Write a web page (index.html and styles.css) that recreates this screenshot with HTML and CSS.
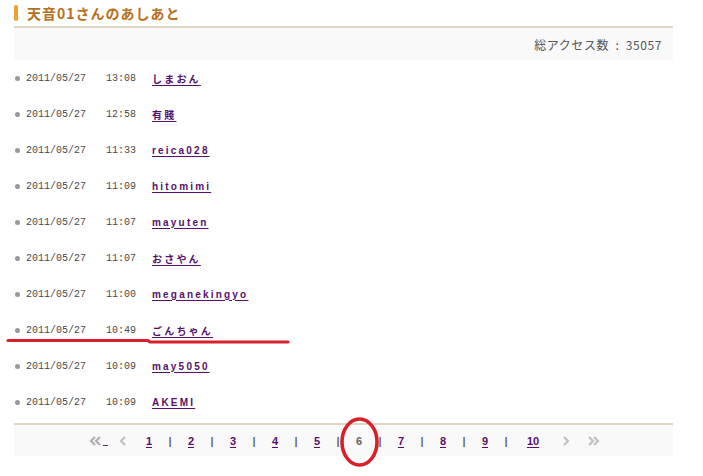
FILE: index.html
```html
<!DOCTYPE html>
<html lang="ja">
<head>
<meta charset="utf-8">
<link rel="stylesheet" href="styles.css">
</head>
<body>
<div class="page">
  <h2 class="title"><span class="title-bar"></span>天音01さんのあしあと</h2>
  <div class="panel total">総アクセス数 : 35057</div>
  <ul class="list">
    <li><span class="dot"></span><span class="date">2011/05/27</span><span class="time">13:08</span><a class="name" href="#">しまおん</a></li>
    <li><span class="dot"></span><span class="date">2011/05/27</span><span class="time">12:58</span><a class="name" href="#">有賤</a></li>
    <li><span class="dot"></span><span class="date">2011/05/27</span><span class="time">11:33</span><a class="name" href="#">reica028</a></li>
    <li><span class="dot"></span><span class="date">2011/05/27</span><span class="time">11:09</span><a class="name" href="#">hitomimi</a></li>
    <li><span class="dot"></span><span class="date">2011/05/27</span><span class="time">11:07</span><a class="name" href="#">mayuten</a></li>
    <li><span class="dot"></span><span class="date">2011/05/27</span><span class="time">11:07</span><a class="name" href="#">おさやん</a></li>
    <li><span class="dot"></span><span class="date">2011/05/27</span><span class="time">11:00</span><a class="name" href="#">meganekingyo</a></li>
    <li><span class="dot"></span><span class="date">2011/05/27</span><span class="time">10:49</span><a class="name" href="#">ごんちゃん</a></li>
    <li><span class="dot"></span><span class="date">2011/05/27</span><span class="time">10:09</span><a class="name" href="#">may5050</a></li>
    <li><span class="dot"></span><span class="date">2011/05/27</span><span class="time">10:09</span><a class="name" href="#">AKEMI</a></li>
  </ul>
  <div class="panel pager">
    <a class="arrow first" href="#"><svg width="14" height="10" viewBox="0 0 14 10"><path d="M6 1 L2 5 L6 9 M11 1 L7 5 L11 9" fill="none" stroke="#b0b0b0" stroke-width="2.2"/></svg><span class="us"></span></a>
    <span class="arrow prev"><svg width="9" height="10" viewBox="0 0 9 10"><path d="M6 1 L2 5 L6 9" fill="none" stroke="#c0c0c0" stroke-width="2.2"/></svg></span>
    <a class="num" href="#">1</a><span class="sep">|</span>
    <a class="num" href="#">2</a><span class="sep">|</span>
    <a class="num" href="#">3</a><span class="sep">|</span>
    <a class="num" href="#">4</a><span class="sep">|</span>
    <a class="num" href="#">5</a><span class="sep">|</span>
    <span class="num current">6</span><span class="sep">|</span>
    <a class="num" href="#">7</a><span class="sep">|</span>
    <a class="num" href="#">8</a><span class="sep">|</span>
    <a class="num" href="#">9</a><span class="sep">|</span>
    <a class="num wide" href="#">10</a>
    <span class="arrow next"><svg width="9" height="10" viewBox="0 0 9 10"><path d="M3 1 L7 5 L3 9" fill="none" stroke="#c0c0c0" stroke-width="2.2"/></svg></span>
    <span class="arrow last"><svg width="14" height="10" viewBox="0 0 14 10"><path d="M3 1 L7 5 L3 9 M8 1 L12 5 L8 9" fill="none" stroke="#c0c0c0" stroke-width="2.2"/></svg></span>
  </div>
</div>
<svg class="marks" width="703" height="476" viewBox="0 0 703 476">
  <path d="M8 340.5 L148 340.5 L150 342 L288 342" fill="none" stroke="#d9202a" stroke-width="3.2" stroke-linecap="round"/>
  <ellipse cx="359.5" cy="442" rx="17.5" ry="23" fill="none" stroke="#d9202a" stroke-width="3.6"/>
</svg>
</body>
</html>
```
FILE: styles.css
```css
html, body {
  margin: 0;
  padding: 0;
  background: #fff;
}
body {
  width: 703px;
  height: 476px;
  overflow: hidden;
  position: relative;
  font-family: "Liberation Mono", "Noto Sans CJK JP", monospace;
}
.page {
  width: 659px;
  margin-left: 14px;
}
.title {
  margin: 0;
  height: 26px;
  display: flex;
  align-items: center;
  gap: 9px;
  font-family: "Noto Sans CJK JP", sans-serif;
  font-size: 14px;
  font-weight: bold;
  color: #b8701f;
  letter-spacing: 1px;
  border-bottom: 2px solid #ddd5c6;
}
.title-bar {
  width: 4px;
  height: 16px;
  border-radius: 2px;
  background: #f0a030;
  margin-top: -1px;
}
.panel {
  background: #f9f9f9;
}
.total {
  height: 32px;
  display: flex;
  align-items: center;
  justify-content: flex-end;
  padding-right: 11px;
  font-family: "Noto Sans CJK JP", sans-serif;
  font-size: 12px;
  color: #555;
  letter-spacing: 0.6px;
  word-spacing: 3px;
}
.list {
  list-style: none;
  margin: 0;
  padding: 0;
  height: 363px;
  border-bottom: 2px solid #ddd5c6;
}
.list li {
  height: 36px;
  display: flex;
  align-items: center;
  font-size: 10px;
  color: #4a4a4a;
}
.dot {
  width: 5px;
  height: 5px;
  border-radius: 50%;
  background: #999;
  margin-left: 1px;
  margin-right: 6px;
}
.date {
  width: 60px;
}
.time {
  width: 30px;
  margin-left: 20px;
}
.name {
  margin-left: 16px;
  font-family: "Liberation Sans", "Noto Sans CJK JP", sans-serif;
  font-weight: bold;
  font-size: 10px;
  letter-spacing: 2.2px;
  color: #56106a;
  text-decoration: underline;
  text-underline-offset: 2px;
}
.pager {
  height: 31px;
  display: flex;
  align-items: center;
  justify-content: center;
  font-family: "Liberation Sans", sans-serif;
  font-size: 11px;
  font-weight: bold;
}
.pager a, .pager span {
  display: flex;
  align-items: center;
  justify-content: center;
}
.arrow.first {
  width: 22px;
  margin-right: 10px;
  text-decoration: none;
}
.us {
  width: 5px;
  height: 1px;
  background: #6a2a7a;
  margin-top: 9px;
}
.arrow.prev {
  width: 9px;
  margin-right: 17px;
}
.num {
  width: 8px;
  color: #56106a;
  text-decoration: underline;
  text-underline-offset: 2px;
}
.num.wide {
  width: 14px;
  margin-left: 3px;
}
.num.current {
  color: #666;
  text-decoration: none;
}
.sep {
  width: 34px;
  color: #666;
}
.arrow.next {
  width: 9px;
  margin-left: 21px;
}
.arrow.last {
  width: 14px;
  margin-left: 16px;
}
.marks {
  position: absolute;
  left: 0;
  top: 0;
  pointer-events: none;
}
```
